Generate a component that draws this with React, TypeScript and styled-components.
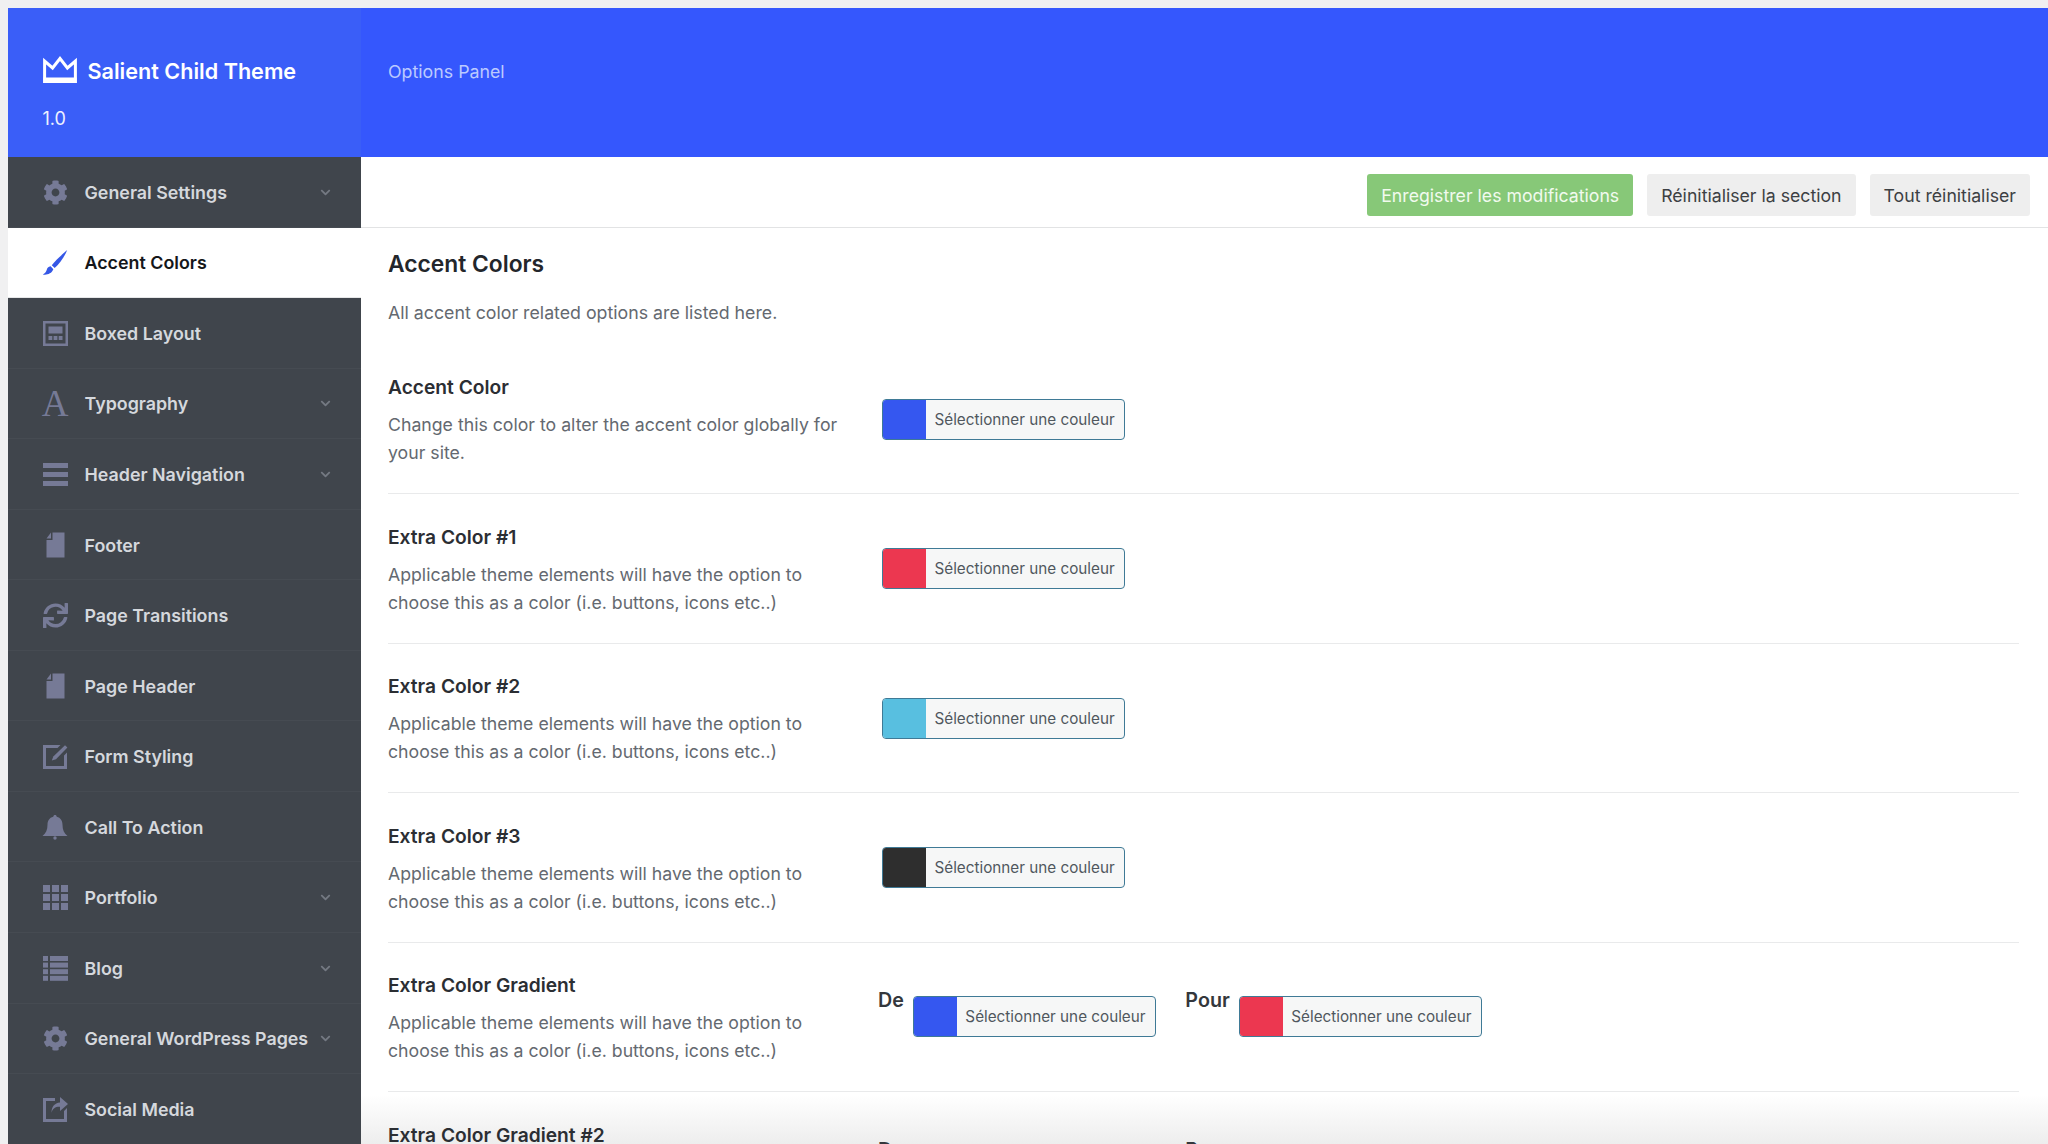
import React from 'react';
import styled, { createGlobalStyle } from 'styled-components';
import { FaCog, FaSync, FaChevronDown } from 'react-icons/fa';

const GlobalStyle = createGlobalStyle`
  html, body {
    margin: 0;
    height: 1144px;
    overflow: hidden;
    background: #f0f0f1;
    font-family: Inter, "Liberation Sans", sans-serif;
  }
  * { box-sizing: border-box; }
`;

const Page = styled.div`
  height: 1144px;
  padding: 8px 0 0 8px;
  display: grid;
  grid-template-columns: 353px 1fr;
  grid-template-rows: 149px 1fr;
  overflow: hidden;
`;

const Brand = styled.div`
  background: #3a5ef8;
  padding: 46px 0 0 34.5px;
  color: #fff;
`;

const BrandRow = styled.div`
  display: flex;
  align-items: center;
  gap: 11px;
  height: 34px;
`;

const BrandName = styled.div`
  font-size: 21.6px;
  font-weight: 600;
`;

const BrandVersion = styled.div`
  font-size: 18px;
  margin-top: 19px;
  line-height: 24px;
  color: #eef1ff;
`;

const TopBar = styled.div`
  background: #3557fd;
  padding: 51px 0 0 27px;
  color: #bccaff;
  font-size: 17.8px;
  line-height: 26px;
`;

const Sidebar = styled.nav`
  background: #40454c;
  display: flex;
  flex-direction: column;
`;

const NavItem = styled.div<{ $active?: boolean }>`
  height: 70.56px;
  flex: none;
  display: flex;
  align-items: center;
  padding: 0 30px 0 34.5px;
  font-size: 17.85px;
  font-weight: 600;
  color: ${({ $active }) => ($active ? '#15171a' : '#d5d8dd')};
  background: ${({ $active }) => ($active ? '#fff' : 'transparent')};
  box-shadow: inset 0 -1px 0 ${({ $active }) => ($active ? '#e6e7e8' : 'rgba(255, 255, 255, 0.035)')};
`;

const NavIcon = styled.span<{ $active?: boolean }>`
  width: 25px;
  height: 25px;
  margin-right: 17px;
  flex: none;
  display: flex;
  align-items: center;
  justify-content: center;
  color: ${({ $active }) => ($active ? '#3557e6' : '#767a96')};
  svg { display: block; flex: none; }
`;

const SerifIcon = styled.span`
  font-family: "Liberation Serif", serif;
  font-size: 37px;
  font-weight: 400;
  line-height: 25px;
`;

const NavLabel = styled.span`
  flex: 1;
  white-space: nowrap;
`;

const NavChevron = styled(FaChevronDown)`
  width: 11px;
  height: 11px;
  color: #747982;
  flex: none;
`;

const Main = styled.main`
  position: relative;
  background: #fff;
  overflow: hidden;
`;

const Toolbar = styled.div`
  height: 71px;
  padding: 17px 18px 0 0;
  display: flex;
  justify-content: flex-end;
  gap: 14px;
  border-bottom: 1px solid #e2e3e4;
`;

const ActionButton = styled.div<{ $primary?: boolean }>`
  height: 42px;
  padding: 0 14px;
  display: flex;
  align-items: center;
  border-radius: 3px;
  font-size: 17.7px;
  white-space: nowrap;
  color: ${({ $primary }) => ($primary ? '#f1faee' : '#3c4043')};
  background: ${({ $primary }) => ($primary ? '#87c878' : '#eeeeee')};
`;

const Content = styled.div`
  position: relative;
  z-index: 1;
  padding: 21px 29px 0 27px;
`;

const SectionTitle = styled.h1`
  margin: 0;
  font-size: 22.8px;
  font-weight: 600;
  line-height: 30px;
  color: #23262b;
`;

const SectionIntro = styled.p`
  margin: 20px 0 0;
  font-size: 17.75px;
  line-height: 28px;
  color: #646970;
`;

const Fields = styled.div`
  margin-top: 17.5px;
`;

const Field = styled.div`
  height: 149.5px;
  display: grid;
  grid-template-columns: 494px 1fr;
  border-bottom: 1px solid #e9eaeb;
`;

const FieldText = styled.div`
  padding-top: 29.5px;
  max-width: 468px;
`;

const FieldTitle = styled.div`
  font-size: 19.2px;
  font-weight: 600;
  line-height: 26px;
  color: #2b2e33;
`;

const FieldDesc = styled.div`
  margin-top: 11px;
  font-size: 17.72px;
  line-height: 28px;
  color: #646970;
`;

const FieldControl = styled.div`
  padding-top: 54px;
`;

const GradientControl = styled.div`
  padding-top: 45.5px;
  margin-left: -4px;
  display: flex;
  gap: 29.5px;
`;

const GradientStop = styled.div`
  display: flex;
  gap: 9px;
`;

const StopLabel = styled.span`
  font-size: 19.7px;
  font-weight: 600;
  line-height: 24px;
  color: #34373c;
`;

const StopPicker = styled.div`
  margin-top: 8px;
`;

const ColorButton = styled.div`
  width: 243px;
  height: 41px;
  display: flex;
  align-items: stretch;
  border: 1px solid #3f7a96;
  border-radius: 4px;
  overflow: hidden;
  background: #f6f7f7;
`;

const ColorChip = styled.span<{ $color: string }>`
  width: 43px;
  flex: none;
  background: ${({ $color }) => $color};
`;

const ColorLabel = styled.span`
  padding-left: 8.5px;
  display: flex;
  align-items: center;
  font-size: 15.25px;
  white-space: nowrap;
  color: #50575e;
`;

const BottomFade = styled.div`
  position: absolute;
  left: 0;
  right: 0;
  bottom: 0;
  height: 50px;
  background: linear-gradient(to bottom, rgba(236, 236, 236, 0), rgba(236, 236, 236, 0.95));
  pointer-events: none;
`;

const CrownSvg = styled.svg`
  margin-top: -3px;
  flex: none;
`;

const CrownIcon = () => (
  <CrownSvg width="34" height="27" viewBox="0 0 34 27">
    <path d="M1.6 25.4V5l8 7L17 2.5 24.4 12l8-7v20.4z" fill="none" stroke="#fff" strokeWidth="3" />
    <rect x="0.5" y="21.5" width="33" height="5.5" fill="#fff" />
  </CrownSvg>
);

const BrushIcon = () => (
  <svg width="26" height="27" viewBox="0 0 25 25" fill="currentColor">
    <path d="M24.2.6C20 4.2 13.2 10.2 9.4 15.2l2.8 2.6C17.3 13.4 21.8 6.6 24.2.6z" />
    <path d="M8.3 16.2c-2.4.2-3.2 1.7-3.8 3.6-.5 1.6-1.5 3.2-3.7 4.2 3.7.6 8.4-.3 10.1-4.9z" />
  </svg>
);

const BoxedIcon = () => (
  <svg width="25" height="25" viewBox="0 0 25 25" fill="currentColor">
    <path fillRule="evenodd" d="M0 0h25v25H0zM2.5 2.5v20h20v-20z" />
    <rect x="5.5" y="5.5" width="14" height="7" />
    <rect x="5.5" y="15" width="3.8" height="4" />
    <rect x="10.6" y="15" width="3.8" height="4" />
    <rect x="15.7" y="15" width="3.8" height="4" />
  </svg>
);

const LinesIcon = () => (
  <svg width="25" height="25" viewBox="0 0 25 25" fill="currentColor">
    <rect y="1" width="25" height="5" />
    <rect y="10" width="25" height="5" />
    <rect y="19" width="25" height="5" />
  </svg>
);

const FileIcon = () => (
  <svg width="25" height="26" viewBox="0 0 25 25" fill="currentColor">
    <path d="M9.5 0H21.5v25H3.5V7.6h6z" />
    <path d="M8 0v6H3.5z" />
  </svg>
);

const EditIcon = () => (
  <svg width="25" height="25" viewBox="0 0 25 25" fill="currentColor">
    <path d="M0 1h17.5l-3 3H3v18h18V11.5l3-3V25H0z" />
    <path d="M22 1.2l2.4 2.4L13 15.2l-4.2 1.3 1.5-4z" />
  </svg>
);

const BellIcon = () => (
  <svg width="26" height="25" viewBox="0 0 25 25" fill="currentColor">
    <path d="M12.5 0c1 0 1.6.7 1.7 1.7 4 .8 5.8 4.2 5.8 8 0 5 1.5 8.5 5 11.3H0c3.5-2.8 5-6.3 5-11.3 0-3.8 1.8-7.2 5.8-8C10.9.7 11.5 0 12.5 0z" />
    <circle cx="12.5" cy="23" r="1.7" />
  </svg>
);

const GridIcon = () => (
  <svg width="25" height="25" viewBox="0 0 25 25" fill="currentColor">
    {[0, 9, 18].map((y) =>
      [0, 9, 18].map((x) => <rect key={`${x}-${y}`} x={x} y={y} width="7" height="7" />),
    )}
  </svg>
);

const ListIcon = () => (
  <svg width="25" height="25" viewBox="0 0 25 25" fill="currentColor">
    {[0, 6.6, 13.2, 19.8].map((y) => (
      <React.Fragment key={y}>
        <rect y={y} width="5" height="5" />
        <rect x="7" y={y} width="18" height="5" />
      </React.Fragment>
    ))}
  </svg>
);

const ShareIcon = () => (
  <svg width="25" height="25" viewBox="0 0 25 25" fill="currentColor">
    <path d="M0 1h12v3H3v18h18v-8l3-3v14H0z" />
    <path d="M17 0l8 7-8 7V9.8c-4.5-.2-7.3 1.500-8.500 6 0-6 3-9.800 8.500-10.300z" />
  </svg>
);

const navItems = [
  { label: 'General Settings', icon: <FaCog size={25} />, chevron: true },
  { label: 'Accent Colors', icon: <BrushIcon />, active: true },
  { label: 'Boxed Layout', icon: <BoxedIcon /> },
  { label: 'Typography', icon: <SerifIcon>A</SerifIcon>, chevron: true },
  { label: 'Header Navigation', icon: <LinesIcon />, chevron: true },
  { label: 'Footer', icon: <FileIcon /> },
  { label: 'Page Transitions', icon: <FaSync size={25} /> },
  { label: 'Page Header', icon: <FileIcon /> },
  { label: 'Form Styling', icon: <EditIcon /> },
  { label: 'Call To Action', icon: <BellIcon /> },
  { label: 'Portfolio', icon: <GridIcon />, chevron: true },
  { label: 'Blog', icon: <ListIcon />, chevron: true },
  { label: 'General WordPress Pages', icon: <FaCog size={25} />, chevron: true },
  { label: 'Social Media', icon: <ShareIcon /> },
];

const themeDesc = 'Applicable theme elements will have the option to choose this as a color (i.e. buttons, icons etc..)';

const colorFields = [
  { title: 'Accent Color', desc: 'Change this color to alter the accent color globally for your site.', color: '#3557f0' },
  { title: 'Extra Color #1', desc: themeDesc, color: '#ec3750' },
  { title: 'Extra Color #2', desc: themeDesc, color: '#58bfe0' },
  { title: 'Extra Color #3', desc: themeDesc, color: '#2e2e2e' },
];

const gradientFields = ['Extra Color Gradient', 'Extra Color Gradient #2'];

const ColorPicker = ({ color }: { color: string }) => (
  <ColorButton>
    <ColorChip $color={color} />
    <ColorLabel>Sélectionner une couleur</ColorLabel>
  </ColorButton>
);

export default function App() {
  return (
    <>
      <GlobalStyle />
      <Page>
        <Brand>
          <BrandRow>
            <CrownIcon />
            <BrandName>Salient Child Theme</BrandName>
          </BrandRow>
          <BrandVersion>1.0</BrandVersion>
        </Brand>
        <TopBar>Options Panel</TopBar>
        <Sidebar>
          {navItems.map((item) => (
            <NavItem key={item.label} $active={item.active}>
              <NavIcon $active={item.active}>{item.icon}</NavIcon>
              <NavLabel>{item.label}</NavLabel>
              {item.chevron && <NavChevron />}
            </NavItem>
          ))}
        </Sidebar>
        <Main>
          <Toolbar>
            <ActionButton $primary>Enregistrer les modifications</ActionButton>
            <ActionButton>Réinitialiser la section</ActionButton>
            <ActionButton>Tout réinitialiser</ActionButton>
          </Toolbar>
          <Content>
            <SectionTitle>Accent Colors</SectionTitle>
            <SectionIntro>All accent color related options are listed here.</SectionIntro>
            <Fields>
              {colorFields.map((field) => (
                <Field key={field.title}>
                  <FieldText>
                    <FieldTitle>{field.title}</FieldTitle>
                    <FieldDesc>{field.desc}</FieldDesc>
                  </FieldText>
                  <FieldControl>
                    <ColorPicker color={field.color} />
                  </FieldControl>
                </Field>
              ))}
              {gradientFields.map((title) => (
                <Field key={title}>
                  <FieldText>
                    <FieldTitle>{title}</FieldTitle>
                    <FieldDesc>{themeDesc}</FieldDesc>
                  </FieldText>
                  <GradientControl>
                    <GradientStop>
                      <StopLabel>De</StopLabel>
                      <StopPicker>
                        <ColorPicker color="#3557f0" />
                      </StopPicker>
                    </GradientStop>
                    <GradientStop>
                      <StopLabel>Pour</StopLabel>
                      <StopPicker>
                        <ColorPicker color="#ec3750" />
                      </StopPicker>
                    </GradientStop>
                  </GradientControl>
                </Field>
              ))}
            </Fields>
          </Content>
          <BottomFade />
        </Main>
      </Page>
    </>
  );
}
